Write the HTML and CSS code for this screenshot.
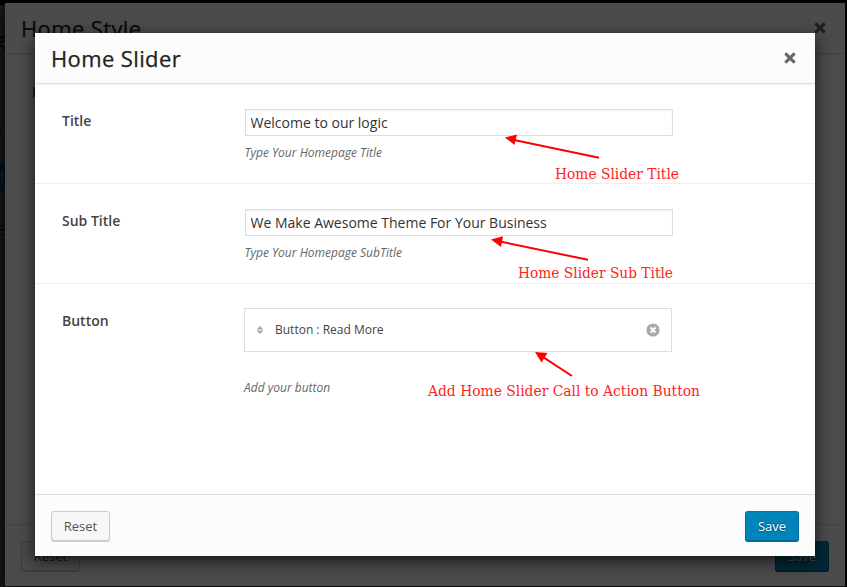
FILE: index.html
```html
<!DOCTYPE html>
<html lang="en">
<head>
<meta charset="utf-8">
<title>Home Slider</title>
<link rel="stylesheet" href="styles.css">
</head>
<body>
<div class="page">
  <span class="page-text page-heading">g</span>
  <span class="page-text page-colon">:</span>
  <span class="page-text page-tab">it</span>
  <span class="page-text page-label">E</span>
</div>

<section class="modal modal-back">
  <header class="modal-header">
    <h2>Home Style</h2>
    <svg class="close" viewBox="0 0 12 12"><path d="M2 2l8 8M10 2l-8 8"/></svg>
  </header>
  <div class="modal-body"><span class="back-label">H</span></div>
  <footer class="modal-footer">
    <button class="button">Reset</button>
    <button class="button primary">Save</button>
  </footer>
</section>
<div class="backdrop"></div>

<section class="modal modal-front">
  <header class="modal-header">
    <h2>Home Slider</h2>
    <svg class="close" viewBox="0 0 12 12"><path d="M2 2l8 8M10 2l-8 8"/></svg>
  </header>
  <div class="modal-body">
    <div class="row">
      <label>Title</label>
      <div class="field">
        <input type="text" value="Welcome to our logic">
        <p class="hint">Type Your Homepage Title</p>
      </div>
    </div>
    <div class="row">
      <label>Sub Title</label>
      <div class="field">
        <input type="text" value="We Make Awesome Theme For Your Business">
        <p class="hint">Type Your Homepage SubTitle</p>
      </div>
    </div>
    <div class="row">
      <label>Button</label>
      <div class="field field-button">
        <div class="item">
          <svg class="sort" viewBox="0 0 8 8"><path d="M4 0L7.5 3.4H.5zM.5 4.6h7L4 8z"/></svg>
          <span>Button : Read More</span>
          <svg class="remove" viewBox="0 0 14 14"><circle cx="7" cy="7" r="6.6"/><path d="M4.500 4.500l5 5M9.500 4.500l-5 5"/></svg>
        </div>
        <p class="hint hint-add">Add your button</p>
      </div>
    </div>
  </div>
  <footer class="modal-footer">
    <button class="button">Reset</button>
    <button class="button primary">Save</button>
  </footer>
</section>

<svg class="notes" viewBox="0 0 847 587">
  <path class="line" d="M599 157.800L514 140M588 259.800L500 241.500M572 376L542 356.300"/>
  <path d="M505 137.500L517 134.500L514.500 145ZM491 239.500L503 236.300L501 247ZM535 352L547.500 353L541.500 362.500Z"/>
  <text x="555" y="179" textLength="124" lengthAdjust="spacingAndGlyphs">Home Slider Title</text>
  <text x="518" y="278" textLength="155" lengthAdjust="spacingAndGlyphs">Home Slider Sub Title</text>
  <text x="428" y="396" textLength="272" lengthAdjust="spacingAndGlyphs">Add Home Slider Call to Action Button</text>
</svg>
</body>
</html>
```
FILE: styles.css
```css
* { box-sizing: border-box; }
body {
  margin: 0;
  width: 847px;
  height: 587px;
  overflow: hidden;
  position: relative;
  background: #000;
  font-family: "Open Sans", sans-serif;
  color: #444;
}
h2, p { margin: 0; }

.page {
  position: absolute;
  inset: 5px 2px 0 0;
  background: #505050;
}
.page-text {
  position: absolute;
  left: 0;
  width: 5px;
  overflow: hidden;
  font-size: 14px;
  line-height: 20px;
  color: #111;
}
.page-heading { top: 25px; font-size: 20px; direction: rtl; }
.page-colon { top: 115px; left: -2px; }
.page-tab { top: 157px; height: 29px; line-height: 29px; background: #003f5d; color: #666; direction: rtl; }
.page-label { top: 215px; direction: rtl; }

.modal {
  position: absolute;
  display: flex;
  flex-direction: column;
  background: #fff;
  box-shadow: 0 5px 15px rgba(0, 0, 0, .7);
}
.modal-back { left: 5px; top: 3px; width: 840px; height: 583px; }
.modal-front { left: 35px; top: 33px; width: 780px; height: 523px; }
.backdrop {
  position: absolute;
  inset: 0;
  background: rgba(0, 0, 0, .7);
}

.modal-header {
  display: flex;
  align-items: center;
  justify-content: space-between;
  height: 51px;
  flex: none;
  padding: 0 18px 0 16px;
  background: #fcfcfc;
  border-bottom: 1px solid #ddd;
  box-shadow: 0 1px 3px rgba(0, 0, 0, .06);
}
.modal-header h2 {
  font-size: 22px;
  font-weight: 400;
  line-height: 50px;
  letter-spacing: .38px;
  color: #222;
  -webkit-text-stroke: .25px #222;
}
.close {
  width: 14px;
  height: 14px;
  fill: none;
  stroke: #666;
  stroke-width: 2.6;
}

.modal-body { flex: 1; }
.back-label {
  display: block;
  padding: 28px 0 0 27px;
  font-size: 14px;
  font-weight: 600;
  line-height: 20px;
}
.row {
  display: flex;
  height: 100px;
  padding: 25px 0 0 27px;
  border-bottom: 1px solid #eee;
}
.row:last-child { border-bottom: 0; }
.row label {
  width: 183px;
  font-size: 14px;
  font-weight: 600;
  line-height: 24px;
}
.field { width: 428px; }
.field input {
  display: block;
  width: 428px;
  height: 27px;
  padding: 0 4.5px;
  border: 1px solid #ddd;
  box-shadow: inset 0 1px 2px rgba(0, 0, 0, .07);
  background: #fff;
  color: #333;
  font: 14px "Open Sans", sans-serif;
}
.hint {
  width: max-content;
  margin: 8px 0 0 -.5px;
  font-size: 12px;
  font-style: italic;
  line-height: 18px;
  color: #666;
}
.field-button { margin: -1px 0 0 -1px; }
.item {
  display: flex;
  align-items: center;
  height: 44px;
  padding: 0 11px 2px 11px;
  border: 1px solid #ddd;
  font-size: 12px;
}
.sort { width: 8px; height: 8px; margin: 1px 11px 0 0; fill: #aaa; }
.remove { width: 14px; height: 14px; margin: 1px 0 0 auto; fill: #aaa; }
.remove path { stroke: #fff; stroke-width: 2; }
.hint-add { margin: 27px 0 0; }

.modal-footer {
  display: flex;
  align-items: flex-start;
  justify-content: space-between;
  height: 62px;
  flex: none;
  padding: 16px;
  background: #fcfcfc;
  border-top: 1px solid #ddd;
}
.button {
  width: 59px;
  height: 30px;
  padding: 0;
  border: 1px solid #ccc;
  border-radius: 3px;
  background: #f7f7f7;
  box-shadow: 0 1px 0 #ccc;
  color: #555;
  font: 13px "Open Sans", sans-serif;
}
.button.primary {
  width: 54px;
  background: #0085ba;
  border-color: #0073aa #006799 #006799;
  box-shadow: 0 1px 0 #006799;
  color: #fff;
  text-shadow: 0 -1px 1px #006799, 1px 0 1px #006799, 0 1px 1px #006799, -1px 0 1px #006799;
}

.notes {
  position: absolute;
  left: 0;
  top: 0;
  width: 847px;
  height: 587px;
  fill: #f00;
  pointer-events: none;
}
.notes .line { fill: none; stroke: #f00; stroke-width: 2; }
.notes text { font: 14.500px "Roboto Slab", "DejaVu Serif", serif; fill: #ff2222; }
```
